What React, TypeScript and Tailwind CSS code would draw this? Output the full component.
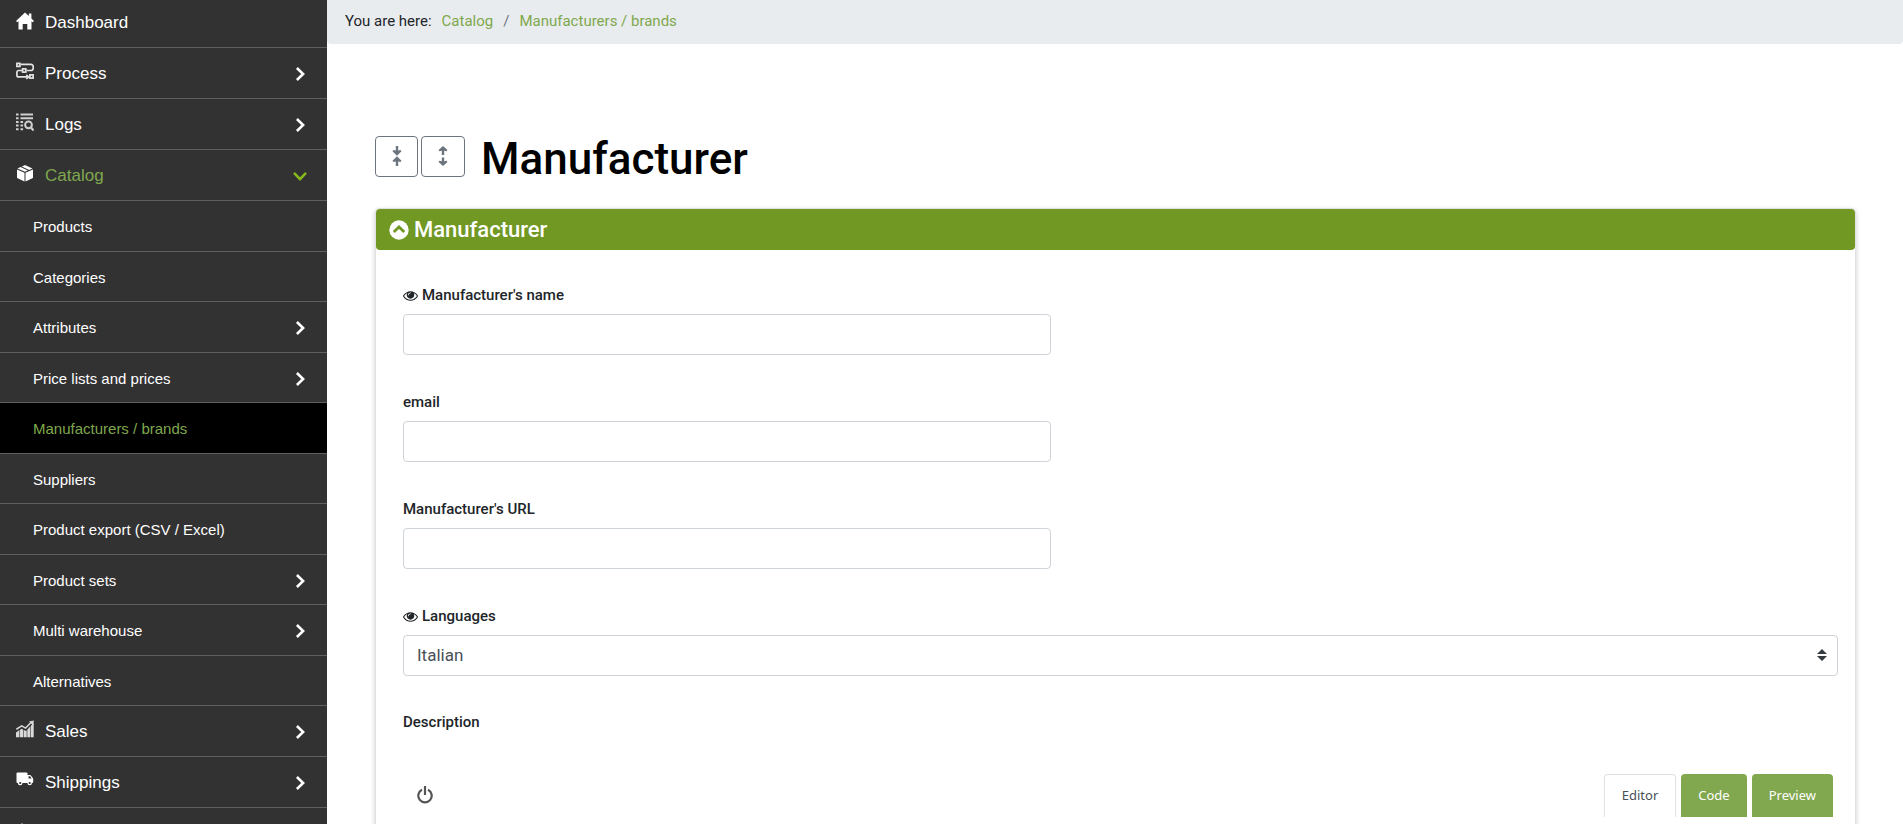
import type { ReactNode } from 'react'
import clsx from 'clsx'

function HomeIcon() {
  return (
    <svg viewBox="0 0 18 18" className="h-[18px] w-[18px]" fill="#fff" aria-hidden="true">
      <path d="M9 .5 0 9l1.200 1.200 1.300-1V17a.6.6 0 0 0 .6.6h3.600V12h4.600v5.600h3.600a.6.6 0 0 0 .6-.6V9.200l1.300 1L18 9l-2.600-2.600V1.600h-2.600v2.300z" />
    </svg>
  )
}

function ProcessIcon() {
  return (
    <svg viewBox="0 0 18 18" className="h-[18px] w-[18px]" fill="none" stroke="#e4e4e4" strokeWidth="1.700" aria-hidden="true">
      <rect x=".9" y="1.400" width="3" height="3" />
      <path d="M4.500 2.400H15a2.200 2.200 0 0 1 2.200 2.200v1.700A2.200 2.200 0 0 1 15 8.500h-4.500M6.500 8.500h-4A1.700 1.700 0 0 0 .9 10.200v3a1.700 1.700 0 0 0 1.700 1.700H12" />
      <rect x="6.600" y="6.900" width="3.200" height="3.200" />
      <rect x="13.900" y="12.900" width="3.200" height="3.200" />
      <path d="m10.300 13 2.200 1.900-2.200 1.900" />
    </svg>
  )
}

function LogsIcon() {
  return (
    <svg viewBox="0 0 18 18" className="h-[18px] w-[18px]" fill="none" stroke="#cfcfcf" aria-hidden="true">
      <path strokeWidth="2" d="M0 1.500h2.600M4.500 1.500H17M0 5.200h2.600M4.500 5.200H17M0 8.900h2.600M4.500 8.900h2.600M0 12.600h2.600M4.500 12.600h2.600M0 16.300h2.600M4.500 16.300h2.600" />
      <circle cx="12.500" cy="11.800" r="3.400" strokeWidth="2" />
      <path strokeWidth="2.300" d="m14.800 14.300 2.800 3.200" />
    </svg>
  )
}

function BoxIcon() {
  return (
    <svg viewBox="0 0 18 18" className="h-[18px] w-[18px]" fill="#fff" aria-hidden="true">
      <path d="M1 5.600 8.500 8.800v8.800L1.600 14.300a1 1 0 0 1-.6-.9zM17 5.600 9.500 8.800v8.800l6.900-3.300a1 1 0 0 0 .6-.9zM1.500 4.500l3-1.400 7.400 3.300L9 7.700zM5.700 2.600 8.500 1.300a1.200 1.200 0 0 1 1 0l7 3.200-3.300 1.400z" />
    </svg>
  )
}

function SalesIcon() {
  return (
    <svg viewBox="0 0 18 18" className="h-[18px] w-[18px]" fill="#d9d9d9" aria-hidden="true">
      <path d="M0 12.500 3.200 10.300v6.900H0zM3.800 9.900 5.800 8.700l1.200.7v7.800H3.800zM7.600 9.700l2.200 1.300.9-.7v6.900H7.600zM11.300 9.800l3-3.500v10.900h-3zM14.900 5.700l2.800-2.900v14.400h-2.800z" />
      <path d="m.3 9.300 5.400-3.500 3.900 2.300L15.500 2" fill="none" stroke="#d9d9d9" strokeWidth="1.500" />
      <path d="M13 1.500 17.900.5l-.9 4.700z" />
    </svg>
  )
}

function TruckIcon() {
  return (
    <svg viewBox="0 0 18 18" className="h-[18px] w-[18px]" aria-hidden="true">
      <path fill="#fff" d="M1.500 1.500h9a1 1 0 0 1 1 1V4h2.600a1 1 0 0 1 .8.400l1.900 2.700a2 2 0 0 1 .4 1.200V11a1 1 0 0 1-1 1H1.500a1 1 0 0 1-1-1V2.500a1 1 0 0 1 1-1z" />
      <path fill="#323232" d="M12.600 5.200h1.500l1.500 2.300h-3z" />
      <circle cx="4.200" cy="12" r="1.700" fill="#323232" stroke="#fff" strokeWidth="1.200" />
      <circle cx="13.700" cy="12" r="1.700" fill="#323232" stroke="#fff" strokeWidth="1.200" />
    </svg>
  )
}

function PeakIcon() {
  return (
    <svg viewBox="0 0 18 18" className="h-[18px] w-[18px]" fill="#d9d9d9" aria-hidden="true">
      <path d="M6 0 8.500 3v14h-5V3z" />
    </svg>
  )
}

function Chevron({ open = false }: { open?: boolean }) {
  return (
    <svg viewBox="0 0 14 14" className={clsx('h-[14px] w-[14px]', open ? 'rotate-90 text-[#86b81b]' : 'text-white')} fill="none" stroke="currentColor" strokeWidth="2.600" aria-hidden="true">
      <path d="m3.900 1 6.200 6-6.200 6" />
    </svg>
  )
}

function EyeIcon() {
  return (
    <svg viewBox="0 0 1792 1792" className="h-[15px] w-[15px]" fill="currentColor" aria-hidden="true">
      <path d="M1664 960q-152-236-381-353 61 104 61 225 0 185-131.500 316.500t-316.500 131.500-316.500-131.500-131.500-316.500q0-121 61-225-229 117-381 353 133 205 333.500 326.500t434.500 121.500 434.500-121.500 333.500-326.500zm-720-384q0-20-14-34t-34-14q-125 0-214.500 89.500t-89.500 214.500q0 20 14 34t34 14 34-14 14-34q0-86 61-147t147-61q20 0 34-14t14-34zm848 384q0 34-20 69-140 230-376.500 368.500t-499.500 138.500-499.500-139-376.500-368q-20-35-20-69t20-69q140-229 376.500-368t499.500-139 499.500 139 376.500 368q20 35 20 69z" />
    </svg>
  )
}

function CollapseIcon() {
  return (
    <svg viewBox="0 0 10 20" className="h-5 w-[10px]" fill="currentColor" aria-hidden="true">
      <path d="M3.800 0h2.400v4.500l2.300-.4 1 1.200L5 9.700.5 5.300l1-1.200 2.300.4zM3.800 20h2.400v-4.500l2.300.4 1-1.200L5 10.300.5 14.700l1 1.200 2.300-.4z" />
    </svg>
  )
}

function ExpandIcon() {
  return (
    <svg viewBox="0 0 10 20" className="h-5 w-[10px]" fill="currentColor" aria-hidden="true">
      <path d="M3.800 9h2.400V4.800l2.300.4 1-1.200L5 0 .5 4l1 1.200 2.300-.4zM3.800 11.500h2.400v3.700l2.300-.4 1 1.200L5 20 .5 16l1-1.200 2.300.4z" />
    </svg>
  )
}

interface SubItem {
  label: string
  more?: boolean
  active?: boolean
}

interface MenuItem {
  label: string
  icon: ReactNode
  more?: boolean
  items?: SubItem[]
}

const menu: MenuItem[] = [
  { label: 'Process', icon: <ProcessIcon />, more: true },
  { label: 'Logs', icon: <LogsIcon />, more: true },
  {
    label: 'Catalog',
    icon: <BoxIcon />,
    more: true,
    items: [
      { label: 'Products' },
      { label: 'Categories' },
      { label: 'Attributes', more: true },
      { label: 'Price lists and prices', more: true },
      { label: 'Manufacturers / brands', active: true },
      { label: 'Suppliers' },
      { label: 'Product export (CSV / Excel)' },
      { label: 'Product sets', more: true },
      { label: 'Multi warehouse', more: true },
      { label: 'Alternatives' },
    ],
  },
  { label: 'Sales', icon: <SalesIcon />, more: true },
  { label: 'Shippings', icon: <TruckIcon />, more: true },
]

function Sidebar() {
  return (
    <nav className="w-[327px] shrink-0 overflow-hidden bg-[#323232] font-['Liberation_Sans',Arial,sans-serif] text-[17px] text-white">
      <ul>
        <li>
          <a href="#" className="flex h-12 items-center gap-[11px] border-b border-[#5d5f60] pl-4">
            <span className="pb-[6px]"><HomeIcon /></span>
            <span className="pb-[2px]">Dashboard</span>
          </a>
        </li>
        {menu.map((item) => (
          <li key={item.label}>
            <a href="#" className={clsx('flex h-[51px] items-center gap-[11px] border-b border-[#5d5f60] pl-4 pr-5 pt-[2px]', item.items && 'text-[#7fa84d]')}>
              <span className="pb-[6px]">{item.icon}</span>
              <span className="grow">{item.label}</span>
              {item.more && <Chevron open={!!item.items} />}
            </a>
            {item.items && (
              <ul className="grid h-[505px] auto-rows-fr text-[15px]">
                {item.items.map((sub) => (
                  <li key={sub.label}>
                    <a href="#" className={clsx('flex h-full items-center justify-between border-b border-[#5d5f60] pl-[33px] pr-5 pt-[3px]', sub.active ? 'bg-black text-[#7fa84d]' : 'text-white')}>
                      {sub.label}
                      {sub.more && <Chevron />}
                    </a>
                  </li>
                ))}
              </ul>
            )}
          </li>
        ))}
        <li className="pl-4 pt-[15px]">
          <PeakIcon />
        </li>
      </ul>
    </nav>
  )
}

function Field({ id, label, required = false, children }: { id: string; label: string; required?: boolean; children: ReactNode }) {
  return (
    <div className="mb-[33px]">
      <label htmlFor={id} className="mb-[5px] flex h-7 items-center gap-1 text-[15px] font-medium text-[#212529]">
        {required && <EyeIcon />}
        {label}
      </label>
      {children}
    </div>
  )
}

const inputClass = 'block h-[41px] w-full rounded border border-[#ced4da] bg-white px-[13px]'

export default function App() {
  return (
    <div className="flex h-screen overflow-hidden bg-white font-[Roboto,sans-serif] text-[#212529]">
      <Sidebar />

      <main className="min-w-0 grow">
        <div className="flex h-11 items-center gap-[10px] rounded-b bg-[#e9ecef] pb-[2px] pl-[18px] text-[15px]">
          <span>You are here:</span>
          <a href="#" className="text-[#7fa84d]">Catalog</a>
          <span className="text-[#6c757d]">/</span>
          <a href="#" className="text-[#7fa84d]">Manufacturers / brands</a>
        </div>

        <div className="pl-12 pr-[47px] pt-[85px]">
          <div className="mb-[19px] flex h-[60px] items-center">
            <div className="mb-[6px] flex gap-[3px] text-[#6c757d]">
              <button type="button" aria-label="Collapse all" className="flex h-[41px] w-[43px] items-center justify-center rounded border border-[#6c757d]"><CollapseIcon /></button>
              <button type="button" aria-label="Expand all" className="flex h-[41px] w-11 items-center justify-center rounded border border-[#6c757d]"><ExpandIcon /></button>
            </div>
            <h1 className="ml-4 text-[44px] font-medium leading-[60px] text-black">Manufacturer</h1>
          </div>

          <section className="rounded border border-[#dfe1e3] shadow-[0_2px_5px_rgba(0,0,0,0.2)]">
            <h2 className="flex h-[41px] items-center gap-[5px] rounded bg-[#709823] pl-[13px] text-[22px] font-medium text-white">
              <svg viewBox="0 0 20 20" className="h-5 w-5" aria-hidden="true">
                <circle cx="10" cy="10" r="9.700" fill="#fff" />
                <path d="m4.800 12 5.200-5 5.200 5" fill="none" stroke="#709823" strokeWidth="2.800" />
              </svg>
              Manufacturer
            </h2>

            <form className="pl-[27px] pr-[17px] pt-[31px]">
              <div className="max-w-[648px]">
                <Field id="name" label="Manufacturer's name" required>
                  <input id="name" type="text" className={inputClass} />
                </Field>
                <Field id="email" label="email">
                  <input id="email" type="email" className={inputClass} />
                </Field>
                <Field id="url" label="Manufacturer's URL">
                  <input id="url" type="text" className={inputClass} />
                </Field>
              </div>
              <Field id="language" label="Languages" required>
                <div className="relative">
                  <select id="language" className={clsx(inputClass, 'appearance-none text-[17px] text-[#495057]')}>
                    <option>Italian</option>
                  </select>
                  <svg viewBox="0 0 10 12" className="pointer-events-none absolute right-[11px] top-[14px] h-3 w-[10px]" fill="#343a40" aria-hidden="true">
                    <path d="M0 5h10L5 0zM0 7h10l-5 5z" />
                  </svg>
                </div>
              </Field>

              <div>
                <h3 className="text-[15px] font-medium leading-[26px]">Description</h3>
                <div className="mt-[39px] flex items-start justify-between pl-[14px] pr-[5px]">
                  <button type="button" aria-label="Toggle editor" className="mt-3 text-[#555]">
                    <svg viewBox="0 0 16 18" className="h-[18px] w-4" fill="none" stroke="currentColor" strokeWidth="2.200" aria-hidden="true">
                      <path d="M5 3.700a6.700 6.700 0 1 0 6 0M8 0v9" />
                    </svg>
                  </button>
                  <div className="flex gap-[5px] font-['Noto_Sans',sans-serif] text-[13px]">
                    <button type="button" className="h-[43px] rounded-t border border-b-0 border-[#dee2e6] px-[17px] text-[#495057]">Editor</button>
                    <button type="button" className="h-[43px] rounded-t bg-[#82a84f] px-[17px] text-white">Code</button>
                    <button type="button" className="h-[43px] rounded-t bg-[#82a84f] px-[17px] text-white">Preview</button>
                  </div>
                </div>
                <div className="h-40" />
              </div>
            </form>
          </section>
        </div>
      </main>
    </div>
  )
}
